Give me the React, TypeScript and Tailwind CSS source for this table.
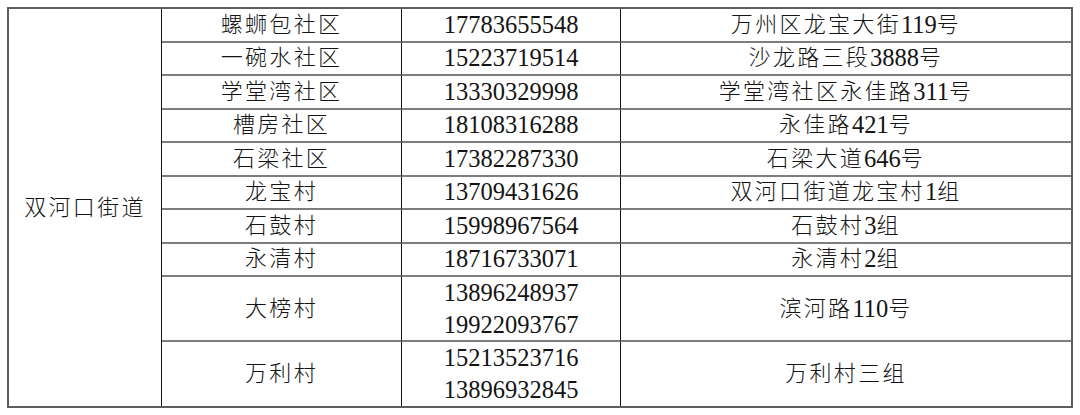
import React from "react";

type Row = {
  name: string;
  phones: string[];
  address: string;
};

const rows: Row[] = [
  { name: "螺蛳包社区", phones: ["17783655548"], address: "万州区龙宝大街119号" },
  { name: "一碗水社区", phones: ["15223719514"], address: "沙龙路三段3888号" },
  { name: "学堂湾社区", phones: ["13330329998"], address: "学堂湾社区永佳路311号" },
  { name: "槽房社区", phones: ["18108316288"], address: "永佳路421号" },
  { name: "石梁社区", phones: ["17382287330"], address: "石梁大道646号" },
  { name: "龙宝村", phones: ["13709431626"], address: "双河口街道龙宝村1组" },
  { name: "石鼓村", phones: ["15998967564"], address: "石鼓村3组" },
  { name: "永清村", phones: ["18716733071"], address: "永清村2组" },
  { name: "大榜村", phones: ["13896248937", "19922093767"], address: "滨河路110号" },
  { name: "万利村", phones: ["15213523716", "13896932845"], address: "万利村三组" },
];

// split mixed text into digit runs (serif) and CJK runs (spaced out a bit)
function Mixed({ text }: { text: string }) {
  const parts = text.split(/([0-9]+)/).filter((p) => p.length > 0);
  return (
    <>
      {parts.map((p, i) =>
        /^[0-9]+$/.test(p) ? (
          <span key={i} className="text-[24.5px]">
            {p}
          </span>
        ) : (
          <span key={i} className="text-[22px] font-light tracking-[2.3px]">
            {p}
          </span>
        )
      )}
    </>
  );
}

export default function App() {
  return (
    <div
      className="w-[1080px] h-[415px] bg-white pt-[7px] pl-[7px] text-[#141414]"
      style={{ fontFamily: '"Liberation Serif", "Noto Sans CJK SC", serif' }}
    >
      <div className="w-[1066px] border-2 border-[#5e5e5e] grid grid-cols-[153px_240px_219px_450px] grid-rows-[repeat(8,33.5px)_65px_63.5px]">
        <div className="row-span-10 border-r border-[#111] flex items-center justify-center">
          <Mixed text="双河口街道" />
        </div>
        {rows.map((r, i) => {
          const last = i === rows.length - 1;
          const rowBorder = last ? "" : "border-b-2 border-b-[#7d7d7d]";
          return (
            <React.Fragment key={r.name}>
              <div
                className={`flex items-center justify-center border-r border-r-[#111] leading-[32px] ${rowBorder}`}
              >
                <Mixed text={r.name} />
              </div>
              <div
                className={`flex flex-col items-center justify-center border-r border-r-[#111] leading-[32px] ${rowBorder}`}
              >
                {r.phones.map((p) => (
                  <span key={p} className="text-[24.5px]">
                    {p}
                  </span>
                ))}
              </div>
              <div
                className={`flex items-center justify-center leading-[32px] ${rowBorder}`}
              >
                <Mixed text={r.address} />
              </div>
            </React.Fragment>
          );
        })}
      </div>
    </div>
  );
}
